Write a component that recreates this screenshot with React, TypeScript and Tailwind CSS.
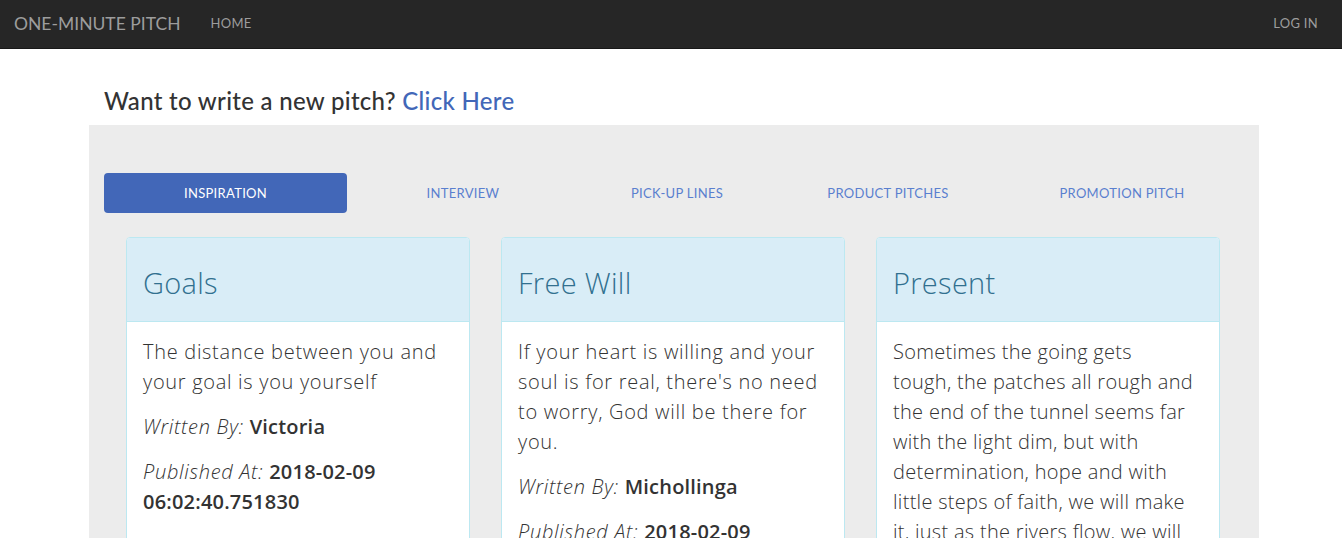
import React from "react";

const tabs = [
  { label: "Inspiration", w: "w-[243px]" },
  { label: "Interview", w: "w-[232px]" },
  { label: "Pick-up lines", w: "w-[196px]" },
  { label: "Product pitches", w: "w-[226px]" },
  { label: "Promotion pitch", w: "w-[242px]" },
];

type Pitch = {
  title: string;
  lines: string[];
  author: string;
  date: string;
  spacing: string;
};

const pitches: Pitch[] = [
  {
    title: "Goals",
    lines: ["The distance between you and your goal is you yourself"],
    author: "Victoria",
    date: "2018-02-09 06:02:40.751830",
    spacing: "tracking-[0.7px]",
  },
  {
    title: "Free Will",
    lines: [
      "If your heart is willing and your soul is for real, there's no need to worry, God will be there for you.",
    ],
    author: "Michollinga",
    date: "2018-02-09 06:05:12.204118",
    spacing: "tracking-[0.7px]",
  },
  {
    title: "Present",
    // wrapped by hand so the breaks fall where the original ones do
    lines: [
      "Sometimes the going gets",
      "tough, the patches all rough and",
      "the end of the tunnel seems far",
      "with the light dim, but with",
      "determination, hope and with",
      "little steps of faith, we will make",
      "it, just as the rivers flow, we will",
      "get there.",
    ],
    author: "Victoria",
    date: "2018-02-09 06:08:55.613920",
    spacing: "tracking-[0.3px]",
  },
];

export default function App() {
  return (
    <div className="min-h-screen bg-white font-['Open_Sans',sans-serif] text-[#333]">
      {/* Navbar */}
      <nav className="h-[49px] bg-[#262626] border-b border-[#181818] flex items-center justify-between font-['Lato',sans-serif]">
        <div className="flex items-center">
          <a href="#" className="pl-[14px] pr-[30px] text-[17.5px] text-[#9d9d9d]">
            ONE-MINUTE PITCH
          </a>
          <a href="#" className="text-[13px] text-[#9d9d9d] tracking-[0.3px]">
            HOME
          </a>
        </div>
        <a href="#" className="pr-6 text-[13px] text-[#9d9d9d] tracking-[0.3px]">
          LOG IN
        </a>
      </nav>

      <div className="w-[1170px] ml-[89px]">
        <h3 className="px-[15px] pt-[39px] pb-[11px] text-[24px] leading-[26px] font-medium tracking-[0.3px] font-['Lato',sans-serif]">
          Want to write a new pitch?{" "}
          <a href="#" className="text-[#4267b8]">
            Click Here
          </a>
        </h3>

        <div className="bg-[#ececec] px-[15px] pt-[48px] pb-10">
          {/* Tabs */}
          <ul className="flex">
            {tabs.map((t, i) => (
              <li key={t.label} className={t.w}>
                <a
                  href="#"
                  className={`flex h-[40px] items-center justify-center rounded-[4px] pt-[1px] text-[13px] uppercase font-['Lato',sans-serif] tracking-[0.3px] ${
                    i === 0 ? "bg-[#4267b8] text-white" : "text-[#5a7fcf]"
                  }`}
                >
                  {t.label}
                </a>
              </li>
            ))}
          </ul>

          {/* Cards */}
          <div className="mt-6 flex gap-[31px] pl-[22px]">
            {pitches.map((p) => (
              <div
                key={p.title}
                className="w-[344px] rounded-[4px] border border-[#bce8f1] bg-white"
              >
                <div className="h-[84px] rounded-t-[3px] border-b border-[#bce8f1] bg-[#d9edf7] px-[16px] flex items-center pt-[6px]">
                  <h2 className="text-[29px] font-light text-[#31708f] tracking-[0.3px]">{p.title}</h2>
                </div>
                <div className={`px-[16px] pt-[15px] pb-4 text-[20px] leading-[30px] ${p.spacing}`}>
                  <p className="mb-[15px] font-light">
                    {p.lines.map((l, i) => (
                      <React.Fragment key={i}>
                        {i > 0 && <br />}
                        {l}
                      </React.Fragment>
                    ))}
                  </p>
                  <p className="mb-[15px]">
                    <em className="font-light">Written By:</em>{" "}
                    <span className="font-semibold tracking-[0.2px]">{p.author}</span>
                  </p>
                  <p className="mb-[15px]">
                    <em className="font-light">Published At:</em>{" "}
                    <span className="font-semibold tracking-[0.2px]">{p.date}</span>
                  </p>
                </div>
              </div>
            ))}
          </div>
        </div>
      </div>
    </div>
  );
}
